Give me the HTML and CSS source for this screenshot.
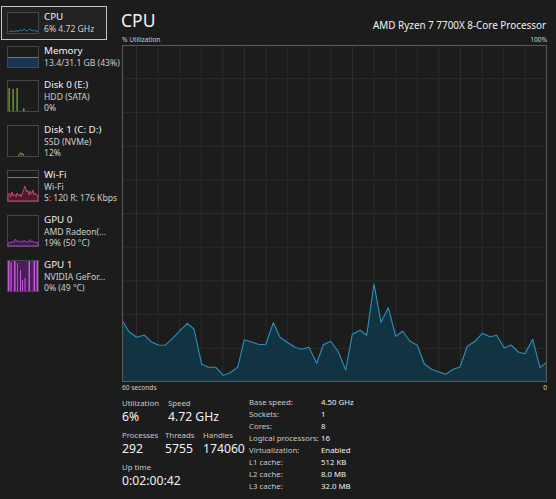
FILE: index.html
```html
<!DOCTYPE html>
<html lang="en">
<head>
    <meta charset="UTF-8">
    <meta name="viewport" content="width=device-width, initial-scale=1.0">
    <title>Task Manager - CPU</title>
    <link rel="stylesheet" href="styles.css">
</head>
<body>
<div class="app">
    <nav class="sidebar">
        <div class="item active">
            <svg class="thumb" width="32" height="22" viewBox="0 0 32 22">
                <rect x="0.5" y="0.5" width="31" height="21" class="frame"/>
                <polyline class="cpu-line" points="2,19.5 5,19 7,20 9,18.5 11,19.5 13,18 15,19 17,17 19,19 21,18.5 23,16.5 25,19 27,18 29,19.5 31,19"/>
            </svg>
            <div class="meta">
                <div class="name">CPU</div>
                <div class="sub">6% 4.72 GHz</div>
            </div>
        </div>
        <div class="item">
            <svg class="thumb" width="32" height="22" viewBox="0 0 32 22">
                <rect x="0.5" y="0.5" width="31" height="21" class="frame"/>
                <rect x="1" y="11" width="30" height="10" fill="#1a3454"/>
                <line x1="1" y1="11.5" x2="31" y2="11.5" stroke="#4a7bb4" stroke-width="1"/>
            </svg>
            <div class="meta">
                <div class="name">Memory</div>
                <div class="sub">13.4/31.1 GB (43%)</div>
            </div>
        </div>
        <div class="item tall">
            <svg class="thumb" width="32" height="32" viewBox="0 0 32 32">
                <rect x="0.5" y="0.5" width="31" height="31" class="frame"/>
                <g fill="#7fb52c">
                    <rect x="1.5" y="8" width="1.2" height="23"/>
                    <rect x="5.5" y="9" width="1.2" height="22"/>
                    <rect x="9.5" y="8" width="1.2" height="23"/>
                    <rect x="16" y="28.5" width="1.5" height="2.5"/>
                </g>
            </svg>
            <div class="meta">
                <div class="name">Disk 0 (E:)</div>
                <div class="sub">HDD (SATA)</div>
                <div class="sub">0%</div>
            </div>
        </div>
        <div class="item tall">
            <svg class="thumb" width="32" height="32" viewBox="0 0 32 32">
                <rect x="0.5" y="0.5" width="31" height="31" class="frame"/>
                <polyline fill="#28401a" stroke="#7fb52c" stroke-width="0.8" points="11,31 12.5,29 13.5,27.5 14.5,30 15.5,28 17,31"/>
            </svg>
            <div class="meta">
                <div class="name">Disk 1 (C: D:)</div>
                <div class="sub">SSD (NVMe)</div>
                <div class="sub">12%</div>
            </div>
        </div>
        <div class="item tall">
            <svg class="thumb" width="32" height="32" viewBox="0 0 32 32">
                <rect x="0.5" y="0.5" width="31" height="31" class="frame"/>
                <line x1="1" y1="7.5" x2="31" y2="7.5" stroke="#d9497a" stroke-width="1"/>
                <polygon fill="#4a1c2c" stroke="#e0507f" stroke-width="0.8" points="1,31 1,25 2.5,23 3.5,27 5,22 6,26 7.5,24 9,27 10,23 11.5,26 13,24 14,27 15.5,23 17,19 18,16 19.5,22 20.5,20 22,25 23,21 24.5,24 26,20 27,25 28.5,23 30,26 31,25 31,31"/>
            </svg>
            <div class="meta">
                <div class="name">Wi-Fi</div>
                <div class="sub">Wi-Fi</div>
                <div class="sub">S: 120 R: 176 Kbps</div>
            </div>
        </div>
        <div class="item tall">
            <svg class="thumb" width="32" height="32" viewBox="0 0 32 32">
                <rect x="0.5" y="0.5" width="31" height="31" class="frame"/>
                <polygon fill="#3f1a4c" stroke="#b04ccc" stroke-width="0.8" points="1,31 1,28 2.5,27 4,28.5 5.5,26 7,27.5 8.5,24 9.5,27 11,25.5 12.5,27 14,26 15.5,27.5 17,25 18.5,27 20,26.5 21.5,27.5 23,24.5 24.5,27 26,26 27.5,27.5 29,27 31,28 31,31"/>
            </svg>
            <div class="meta">
                <div class="name">GPU 0</div>
                <div class="sub">AMD Radeon(...</div>
                <div class="sub">19% (50 °C)</div>
            </div>
        </div>
        <div class="item tall">
            <svg class="thumb" width="32" height="32" viewBox="0 0 32 32">
                <rect x="0.5" y="0.5" width="31" height="31" class="frame"/>
                <rect x="1" y="1" width="30" height="30" fill="#4a1f58"/>
                <g fill="#c356dc">
                    <rect x="1" y="1" width="1.5" height="30"/>
                    <rect x="3.5" y="2" width="1.2" height="29"/>
                    <rect x="7" y="1" width="1.5" height="30"/>
                    <rect x="10" y="3" width="0.8" height="28"/>
                    <rect x="13" y="10" width="1" height="21"/>
                    <rect x="15" y="20" width="1" height="11"/>
                    <rect x="17.5" y="18" width="1" height="13"/>
                    <rect x="21.5" y="1" width="1.5" height="30"/>
                    <rect x="26.5" y="1" width="1.5" height="30"/>
                    <rect x="29.5" y="1" width="1.5" height="30"/>
                </g>
            </svg>
            <div class="meta">
                <div class="name">GPU 1</div>
                <div class="sub">NVIDIA GeFor...</div>
                <div class="sub">0% (49 °C)</div>
            </div>
        </div>
    </nav>

    <main class="main">
        <header class="head">
            <h1 class="title">CPU</h1>
            <div class="model">AMD Ryzen 7 7700X 8-Core Processor</div>
        </header>
        <div class="axis"><span>% Utilization</span><span>100%</span></div>

        <svg class="chart" width="425" height="337" viewBox="0 0 425 337">
            <g class="grid">
                <line x1="0" y1="33.7" x2="425" y2="33.7"/>
                <line x1="0" y1="67.4" x2="425" y2="67.4"/>
                <line x1="0" y1="101.1" x2="425" y2="101.1"/>
                <line x1="0" y1="134.8" x2="425" y2="134.8"/>
                <line x1="0" y1="168.5" x2="425" y2="168.5"/>
                <line x1="0" y1="202.2" x2="425" y2="202.2"/>
                <line x1="0" y1="235.9" x2="425" y2="235.9"/>
                <line x1="0" y1="269.6" x2="425" y2="269.6"/>
                <line x1="0" y1="303.3" x2="425" y2="303.3"/>
                <line x1="14.5" y1="0" x2="14.5" y2="337"/>
                <line x1="36.1" y1="0" x2="36.1" y2="337"/>
                <line x1="57.7" y1="0" x2="57.7" y2="337"/>
                <line x1="79.3" y1="0" x2="79.3" y2="337"/>
                <line x1="100.9" y1="0" x2="100.9" y2="337"/>
                <line x1="122.5" y1="0" x2="122.5" y2="337"/>
                <line x1="144.1" y1="0" x2="144.1" y2="337"/>
                <line x1="165.7" y1="0" x2="165.7" y2="337"/>
                <line x1="187.3" y1="0" x2="187.3" y2="337"/>
                <line x1="208.9" y1="0" x2="208.9" y2="337"/>
                <line x1="230.5" y1="0" x2="230.5" y2="337"/>
                <line x1="252.1" y1="0" x2="252.1" y2="337"/>
                <line x1="273.7" y1="0" x2="273.7" y2="337"/>
                <line x1="295.3" y1="0" x2="295.3" y2="337"/>
                <line x1="316.9" y1="0" x2="316.9" y2="337"/>
                <line x1="338.5" y1="0" x2="338.5" y2="337"/>
                <line x1="360.1" y1="0" x2="360.1" y2="337"/>
                <line x1="381.7" y1="0" x2="381.7" y2="337"/>
                <line x1="403.3" y1="0" x2="403.3" y2="337"/>
            </g>
            <!-- last 60 seconds of usage -->
            <polygon class="usage" points="0.5,336.5 0.5,276 7,286.7 14.7,292.3 22.3,290 29,296.7 36.3,300 43,300.3 51.3,292.7 58,285.7 65.3,278.3 72,284 79.7,319.3 86.3,322.3 94,322.3 101.3,330.3 108,327.7 115.7,322.3 122.3,294.7 129.7,297 136.3,299.3 143.7,299.7 151.3,277.7 158,292.3 164.7,297 173,302.3 179.7,304.3 187,302.3 194.7,318.3 201.3,299.7 208.7,296.3 216.3,306.7 223.7,325 230.3,289.3 238,285.3 244.7,290.3 252,239 259,277.3 266.3,262.7 273.7,291.3 280.7,286.3 288,296.3 295.3,300.3 302.3,319 309.7,324.3 316.3,326.7 323.7,329.3 331.3,324.3 338,322 345.3,301.3 353,296.3 360.3,288.3 368,291.7 374.7,290.3 382.3,303 389,300 396.3,307 403,308.7 410.7,294.3 418,322.7 424.5,317.3 424.5,336.5"/>
            <rect class="border" x="0.5" y="0.5" width="424" height="336"/>
        </svg>
        <div class="axis"><span>60 seconds</span><span>0</span></div>

        <section class="stats">
            <div class="live">
                <div class="row">
                    <div class="stat w46">
                        <div class="label">Utilization</div>
                        <div class="value">6%</div>
                    </div>
                    <div class="stat">
                        <div class="label">Speed</div>
                        <div class="value">4.72 GHz</div>
                    </div>
                </div>
                <div class="row">
                    <div class="stat w43">
                        <div class="label">Processes</div>
                        <div class="value">292</div>
                    </div>
                    <div class="stat w38">
                        <div class="label">Threads</div>
                        <div class="value">5755</div>
                    </div>
                    <div class="stat">
                        <div class="label">Handles</div>
                        <div class="value">174060</div>
                    </div>
                </div>
                <div class="row">
                    <div class="stat">
                        <div class="label">Up time</div>
                        <div class="value">0:02:00:42</div>
                    </div>
                </div>
            </div>
            <dl class="specs">
                <dt>Base speed:</dt><dd>4.50 GHz</dd>
                <dt>Sockets:</dt><dd>1</dd>
                <dt>Cores:</dt><dd>8</dd>
                <dt>Logical processors:</dt><dd>16</dd>
                <dt>Virtualization:</dt><dd>Enabled</dd>
                <dt>L1 cache:</dt><dd>512 KB</dd>
                <dt>L2 cache:</dt><dd>8.0 MB</dd>
                <dt>L3 cache:</dt><dd>32.0 MB</dd>
            </dl>
        </section>
    </main>
</div>
</body>
</html>
```

FILE: styles.css
```css
body, html {
    margin: 0;
    padding: 0;
    width: 100%;
    height: 100%;
    background-color: #1c1c1c;
    color: #f2f2f2;
    font-family: "Noto Sans", "Open Sans", sans-serif;
}
.app {
    display: flex;
    height: 100%;
}

/* left nav */
.sidebar {
    width: 110px;
    padding: 6px 0 0 1px;
    box-sizing: border-box;
    display: flex;
    flex-direction: column;
}
.item {
    display: flex;
    gap: 5px;
    padding: 5px 5px 4px;
    border: 1px solid transparent;
    width: 106px;
    box-sizing: border-box;
}
.item.active {
    border-color: #c4c4c4;
    background: #222;
}
.thumb {
    flex: none;
}
.thumb .frame {
    fill: #1c1c1c;
    stroke: #474747;
    stroke-width: 1;
}
.cpu-line {
    fill: none;
    stroke: #2f93bd;
    stroke-width: 0.8;
}
.meta {
    margin-top: -2px;
    min-width: 0;
}
.name {
    font-size: 9.8px;
    line-height: 14px;
    white-space: nowrap;
}
.sub {
    font-size: 8.6px;
    line-height: 11px;
    color: #cdcdcd;
    white-space: nowrap;
}

/* main panel */
.main {
    flex: 1;
    padding: 0 9px 0 12px;
    display: flex;
    flex-direction: column;
}
.head {
    display: flex;
    justify-content: space-between;
    align-items: flex-end;
    height: 34px;
}
.title {
    margin: 0;
    font-size: 17.5px;
    font-weight: 400;
    line-height: 24px;
    margin-left: -1px;
    align-self: flex-start;
    margin-top: 8px;
}
.model {
    font-size: 9.9px;
    line-height: 14px;
    margin-bottom: 2px;
    margin-right: 1px;
}
.axis {
    display: flex;
    justify-content: space-between;
    font-size: 6.6px;
    line-height: 11px;
    color: #cfcfcf;
}
.chart {
    display: block;
}
.grid line {
    stroke: #2c2c2c;
    stroke-width: 1;
}
.usage {
    fill: #123442;
    stroke: #2c90ba;
    stroke-width: 1.1;
    stroke-linejoin: round;
}
.border {
    fill: none;
    stroke: #5a5a5a;
    stroke-width: 1;
}

/* stats */
.stats {
    display: flex;
    margin-top: 4px;
}
.live {
    width: 127px;
}
.row {
    display: flex;
    margin-bottom: 4px;
}
.row:last-child {
    margin-top: 1px;
}
.w46 { width: 46px; }
.w43 { width: 43px; }
.w38 { width: 38px; }
.label {
    font-size: 7.8px;
    line-height: 12px;
    color: #c8c8c8;
}
.value {
    font-size: 12.2px;
    line-height: 16px;
}
.specs {
    margin: 0;
    display: grid;
    grid-template-columns: 72px auto;
    font-size: 7.8px;
    line-height: 11.9px;
}
.specs dt {
    color: #c8c8c8;
}
.specs dd {
    margin: 0;
    color: #f0f0f0;
}
```
